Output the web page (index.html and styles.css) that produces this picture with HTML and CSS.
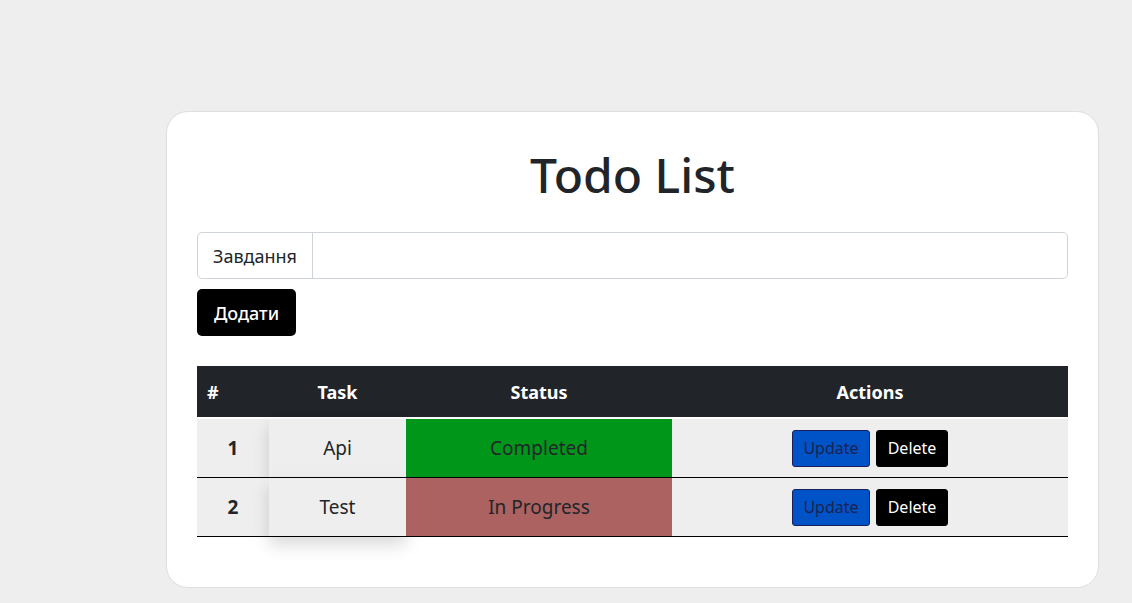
FILE: index.html
```html
<!DOCTYPE html>
<html lang="uk">
<head>
<meta charset="utf-8">
<title>Todo List</title>
<link rel="stylesheet" href="styles.css">
</head>
<body>
<div class="page">
  <div class="card">
    <h1 class="title">Todo List</h1>
    <div class="input-group">
      <span class="input-label">Завдання</span>
      <input class="input-field" type="text">
    </div>
    <button class="btn-add">Додати</button>
    <table class="todo-table">
      <thead>
        <tr>
          <th class="col-num">#</th>
          <th class="col-task">Task</th>
          <th class="col-status">Status</th>
          <th class="col-actions">Actions</th>
        </tr>
      </thead>
      <tbody>
        <tr>
          <td class="cell-num">1</td>
          <td class="cell-task">Api</td>
          <td class="cell-status status-done">Completed</td>
          <td class="cell-actions"><button class="btn-update">Update</button><button class="btn-delete">Delete</button></td>
        </tr>
        <tr>
          <td class="cell-num">2</td>
          <td class="cell-task">Test</td>
          <td class="cell-status status-progress">In Progress</td>
          <td class="cell-actions"><button class="btn-update">Update</button><button class="btn-delete">Delete</button></td>
        </tr>
      </tbody>
    </table>
  </div>
</div>
</body>
</html>
```
FILE: styles.css
```css
* { box-sizing: border-box; }
html, body {
  margin: 0;
  padding: 0;
  background: #eeeeee;
  font-family: "Noto Sans", "Open Sans", sans-serif;
  color: #212529;
}
.page {
  padding: 111px 33px 14px 166px;
}
.card {
  width: 933px;
  background: #fff;
  border: 1px solid #dedede;
  border-radius: 22px;
  padding: 30px 30px 50px 30px;
}
.title {
  margin: 0 0 24px 0;
  text-align: center;
  font-size: 48px;
  font-weight: 500;
  line-height: 66px;
  color: #212529;
}
.input-group {
  display: flex;
  height: 47px;
  border: 1px solid #ced4da;
  border-radius: 5px;
}
.input-label {
  display: flex;
  align-items: center;
  padding: 0 15px;
  font-size: 18px;
  border-right: 1px solid #ced4da;
  color: #212529;
}
.input-field {
  flex: 1;
  border: none;
  outline: none;
  background: transparent;
  border-radius: 0 5px 5px 0;
}
.btn-add {
  display: block;
  margin-top: 10px;
  height: 47px;
  width: 99px;
  background: #000;
  color: #fff;
  border: none;
  border-radius: 5px;
  font-family: inherit;
  font-size: 18px;
  font-weight: 500;
  padding: 0;
}
.todo-table {
  margin-top: 30px;
  width: 100%;
  border-collapse: separate;
  border-spacing: 0;
  table-layout: fixed;
  font-size: 19px;
}
.todo-table th {
  background: #212529;
  color: #fff;
  height: 53px;
  font-weight: 700;
  font-size: 18px;
  text-align: center;
  border-bottom: 2px solid #fff;
  padding: 0;
}
.todo-table th.col-num { text-align: left; padding-left: 10px; width: 72px; }
.col-task { width: 137px; }
.col-status { width: 266px; }
.todo-table td {
  background: #eeeeee;
  height: 59px;
  text-align: center;
  border-bottom: 1px solid #000;
  padding: 0;
  color: #212529;
}
.cell-num { font-weight: 700; }
.cell-task {
  box-shadow: 0 8px 16px rgba(0, 0, 0, 0.15);
}
.status-done { background: #00961a !important; }
.status-progress { background: #ab6261 !important; }
.cell-actions { font-size: 0; }
.btn-update, .btn-delete {
  display: inline-block;
  vertical-align: middle;
  height: 37px;
  font-family: inherit;
  font-size: 16px;
  border-radius: 3px;
  padding: 0 10px;
}
.btn-update {
  background: #0052c7;
  color: #1b2250;
  border: 1px solid #1a1f5c;
  width: 78px;
  margin-right: 6px;
}
.btn-delete {
  background: #000;
  color: #fff;
  border: 1px solid #000;
  width: 72px;
}
```
